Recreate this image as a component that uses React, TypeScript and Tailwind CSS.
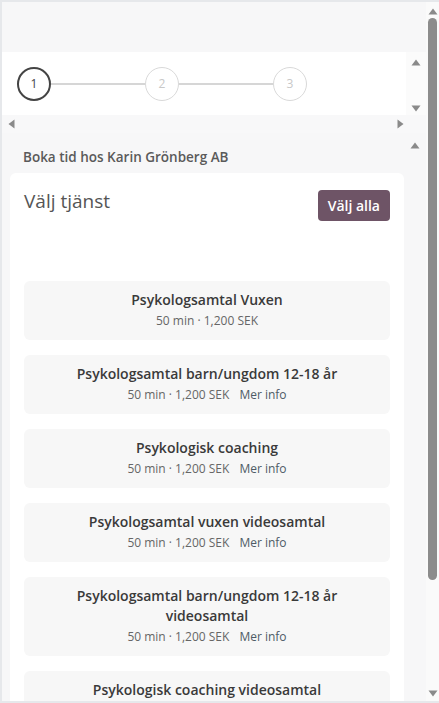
import React from 'react';

interface Service {
  id: number;
  name: string;
  info: boolean;
}

const services: Service[] = [
  { id: 1, name: 'Psykologsamtal Vuxen', info: false },
  { id: 2, name: 'Psykologsamtal barn/ungdom 12-18 år', info: true },
  { id: 3, name: 'Psykologisk coaching', info: true },
  { id: 4, name: 'Psykologsamtal vuxen videosamtal', info: true },
  { id: 5, name: 'Psykologsamtal barn/ungdom 12-18 år videosamtal', info: true },
  { id: 6, name: 'Psykologisk coaching videosamtal', info: true },
];

const Up = ({ className = '' }: { className?: string }) => (
  <svg width="10" height="7" viewBox="0 0 10 7" className={className}>
    <path d="M5 0.5 L9.5 6.5 L0.5 6.5 Z" fill="#8a8a8a" />
  </svg>
);

const Down = ({ className = '' }: { className?: string }) => (
  <svg width="10" height="7" viewBox="0 0 10 7" className={className}>
    <path d="M0.5 0.5 L9.5 0.5 L5 6.5 Z" fill="#8a8a8a" />
  </svg>
);

const Left = () => (
  <svg width="7" height="10" viewBox="0 0 7 10">
    <path d="M0.5 5 L6.5 0.5 L6.5 9.5 Z" fill="#8a8a8a" />
  </svg>
);

const Right = () => (
  <svg width="7" height="10" viewBox="0 0 7 10">
    <path d="M6.5 5 L0.5 0.5 L0.5 9.5 Z" fill="#8a8a8a" />
  </svg>
);

const Step = ({ n, active }: { n: number; active?: boolean }) => (
  <div
    className={
      active
        ? 'w-[34px] h-[34px] rounded-full border-2 border-[#444] flex items-center justify-center text-[12px] text-[#444] bg-white shrink-0'
        : 'w-[34px] h-[34px] rounded-full border border-[#d9d9d9] flex items-center justify-center text-[12px] text-[#c8c8c8] bg-white shrink-0'
    }
  >
    {n}
  </div>
);

const App: React.FC = () => {
  return (
    <div
      className="h-[703px] w-[439px] overflow-hidden border-t-2 border-l-2 border-b-2 border-[#e6e8eb] bg-[#f8f9fa] flex"
      style={{ fontFamily: '"Open Sans", "Noto Sans", sans-serif' }}
    >
      <div className="flex-1 flex flex-col min-w-0">
        <div className="h-[50px] bg-[#f7f7f8] shrink-0" />

        {/* stepper */}
        <div className="h-[63px] bg-white flex shrink-0">
          <div className="flex-1 flex items-center pl-[15px]">
            <Step n={1} active />
            <div className="w-[94px] h-[2px] bg-[#d6d6d6]" />
            <Step n={2} />
            <div className="w-[94px] h-[2px] bg-[#d6d6d6]" />
            <Step n={3} />
          </div>
          <div className="w-[20px] flex flex-col items-center justify-between pt-[7px] pb-[3px] bg-[#fbfbfb]">
            <Up />
            <Down />
          </div>
        </div>
        <div className="h-[18px] bg-[#f8f8f9] flex items-center justify-between pl-[6px] pr-[22px] shrink-0">
          <Left />
          <Right />
        </div>

        {/* booking */}
        <div className="flex-1 bg-[#f7f7f8] flex min-h-0">
          <div className="flex-1 pl-[8px] min-w-0">
            <div className="h-[40px] flex items-center pl-[13px] pt-[8px] text-[13.5px] font-semibold text-[#5a5a5a]">
              Boka tid hos Karin Grönberg AB
            </div>
            <div className="bg-white rounded-t-[6px] px-[14px] pt-[17px] flex flex-col">
              <div className="flex items-start justify-between">
                <h1 className="text-[19px] text-[#555] leading-[24px] mt-[-1px]">Välj tjänst</h1>
                <button className="h-[31px] px-[10px] rounded-[4px] bg-[#6e5466] text-white text-[14px] font-semibold">
                  Välj alla
                </button>
              </div>
              <div className="flex flex-col gap-[15px] mt-[60px]">
                {services.map((s) => (
                  <div
                    key={s.id}
                    className="bg-[#f7f7f7] rounded-[6px] px-[40px] pt-[9px] pb-[11px] text-center"
                  >
                    <div className="text-[14px] font-semibold text-[#3a3a3a] leading-[20px]">{s.name}</div>
                    <div className="text-[12px] text-[#666] leading-[17px] mt-[2px]">
                      50 min · 1,200 SEK
                      {s.info && <span className="ml-[10px] text-[#4d5b66]">Mer info</span>}
                    </div>
                  </div>
                ))}
              </div>
            </div>
          </div>
          <div className="w-[22px] flex flex-col items-center pt-[9px]">
            <Up />
          </div>
        </div>
      </div>

      {/* page scrollbar */}
      <div className="w-[13px] bg-[#fafafa] flex flex-col items-center pt-[6px] pb-[4px] shrink-0">
        <Up />
        <div className="w-[9px] h-[562px] rounded-full bg-[#8c8c8c] mt-[3px]" />
        <div className="flex-1" />
        <Down />
      </div>
    </div>
  );
};

export default App;
